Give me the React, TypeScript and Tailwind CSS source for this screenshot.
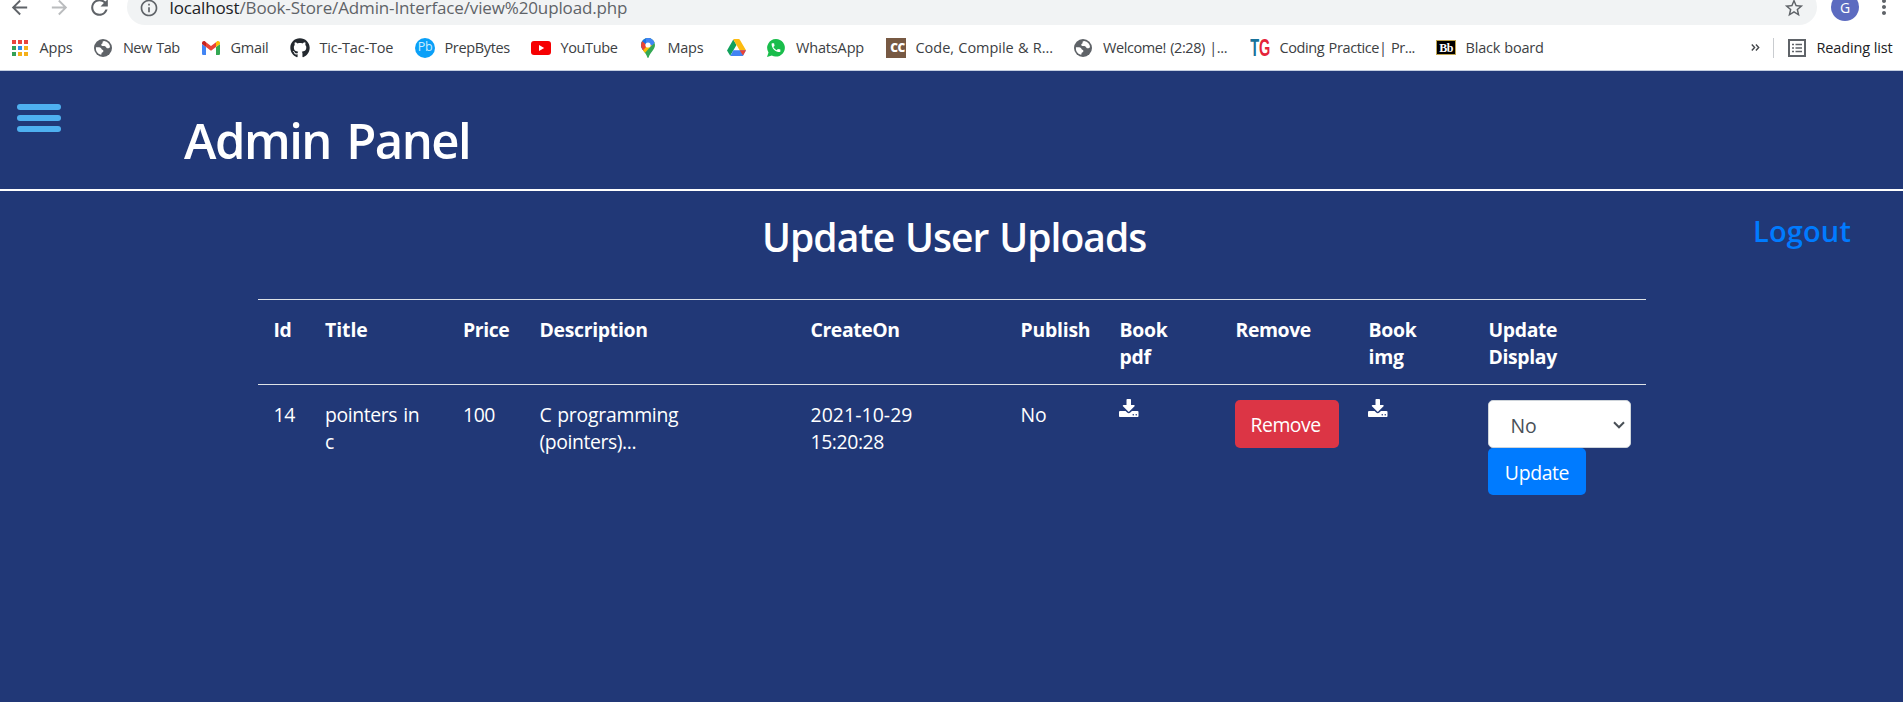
import type { ReactNode } from "react";
import {
  MdArrowBack,
  MdArrowForward,
  MdInfoOutline,
  MdMoreVert,
  MdRefresh,
  MdStarBorder,
} from "react-icons/md";
import { FaGithub } from "react-icons/fa";

function AppsIcon() {
  const colors = ["#e8453c", "#e8453c", "#e8453c", "#34a056", "#2b8de6", "#f5b01a", "#34a056", "#f5b01a", "#f5b01a"];
  return (
    <div className="grid grid-cols-3 gap-[2px]">
      {colors.map((fill, i) => (
        <svg key={i} className="size-[4px]" viewBox="0 0 4 4">
          <rect width="4" height="4" fill={fill} />
        </svg>
      ))}
    </div>
  );
}

function GlobeIcon() {
  return (
    <svg className="size-[18px]" viewBox="0 0 18 18">
      <circle cx="9" cy="9" r="9" fill="#5f6368" />
      <path
        d="M10.2 1.9C8.9 2 8.3 2.7 8.6 3.6c.3.8-.7 1.200-1.200 1.700-.5.6.1 1.500.9 1.600 1.300.1 2.700-.1 3.400.8.5.8 1 1.700 2.100 1.600 1 0 1.500-.8 2.300-.8A7.100 7.100 0 0 0 10.200 1.900Z"
        fill="#fff"
      />
      <path
        d="M1.900 8.300c1.500.1 2.800-.2 4.200.3 1.300.4 1.100 1.800 2.200 2.200 1 .3 1.400 1 .9 1.900-.5.8-1.600.7-1.700 1.700 0 .7-.1 1.200-.6 1.400A7.100 7.100 0 0 1 1.900 8.300Z"
        fill="#fff"
      />
    </svg>
  );
}

function GmailIcon() {
  return (
    <svg className="h-[14px] w-[18px]" viewBox="0 0 18 14">
      <path d="M0 3v9.700C0 13.400.6 14 1.300 14H4V6Z" fill="#4285f4" />
      <path d="M18 3v9.700c0 .7-.6 1.300-1.300 1.300H14V6Z" fill="#34a853" />
      <path d="M14 1.300V6l4-3V2c0-1.800-2-2.500-3.200-1.500Z" fill="#fbbc04" />
      <path d="M4 1.300 9 5l5-3.700V6L9 9.800 4 6Z" fill="#ea4335" />
      <path d="M0 2v1l4 3V1.300L3.200.5C2-.5 0 .2 0 2Z" fill="#c5221f" />
    </svg>
  );
}

function PrepBytesIcon() {
  return (
    <div className="flex size-[20px] items-center justify-center rounded-full bg-[#0aa0f8] text-[12.5px] leading-none tracking-[-0.3px] text-[#c9ecff]">
      Pb
    </div>
  );
}

function YouTubeIcon() {
  return (
    <svg className="h-[14px] w-[20px]" viewBox="0 0 20 14">
      <rect width="20" height="14" rx="3" fill="#f60002" />
      <path d="M8 4v6l5.200-3Z" fill="#fff" />
    </svg>
  );
}

function MapsIcon() {
  return (
    <svg className="h-[20px] w-[14px]" viewBox="0 0 14 20">
      <defs>
        <clipPath id="pin">
          <path d="M7 0a7 7 0 0 1 7 7c0 2.500-1.300 4.300-2.800 6.200C9.600 15.200 8.300 17 7.700 19.300c-.2.900-1.200.9-1.400 0C5.700 17 4.400 15.200 2.800 13.200 1.300 11.300 0 9.500 0 7a7 7 0 0 1 7-7Z" />
        </clipPath>
      </defs>
      <g clipPath="url(#pin)">
        <rect width="14" height="20" fill="#34a853" />
        <path d="M0 13.500 14-2H0Z" fill="#1a73e8" />
        <path d="M-1 1.500 7 8l-6 7Z" fill="#ea4335" />
        <path d="M5 0h10v3.500L9 9.500 5 5Z" fill="#4285f4" />
        <path d="M7 7 0 14.500 3 16l8-9Z" fill="#fbbc04" />
      </g>
      <circle cx="7" cy="7" r="2.600" fill="#fff" />
    </svg>
  );
}

function DriveIcon() {
  return (
    <svg className="h-[17px] w-[19px]" viewBox="0 0 19 17">
      <path d="M6.300.6 9.500 6 3.200 16.800 0 11.400Z" fill="#11a15c" />
      <path d="M6.300.6C6.500.2 6.900 0 7.300 0h4.400c.4 0 .8.200 1 .6L19 11.300h-6.400Z" fill="#fdbb10" />
      <path d="M6.400 11.300H19L16.200 16.400c-.2.400-.6.600-1 .6H3.300Z" fill="#4283f3" />
      <path d="M12.600 11.300H19l-3 5.300Z" fill="#ea4335" />
    </svg>
  );
}

function WhatsAppIcon() {
  return (
    <svg className="size-[18px]" viewBox="0 0 18 18">
      <path d="M9.100 0a8.800 8.800 0 1 1-4.300 16.500L0 18l1.500-4.600A8.800 8.800 0 0 1 9.100 0Z" fill="#19bd4b" />
      <path
        transform="translate(3.100 2.700) scale(.49)"
        d="M6.620 10.790c1.440 2.830 3.760 5.140 6.590 6.590l2.200-2.200c.27-.27.67-.36 1.020-.24 1.120.37 2.330.57 3.570.57.55 0 1 .45 1 1V20c0 .55-.45 1-1 1-9.390 0-17-7.610-17-17 0-.55.45-1 1-1h3.500c.55 0 1 .45 1 1 0 1.250.2 2.450.57 3.570.11.35.03.74-.25 1.020l-2.200 2.200z"
        fill="#fff"
      />
    </svg>
  );
}

function CodeChefIcon() {
  return (
    <div className="flex h-[20px] w-[20px] items-center justify-center bg-[#775943] pl-[3px] text-[12px] font-extrabold leading-none tracking-[-0.6px] text-white">
      CC
    </div>
  );
}

function TgIcon() {
  return (
    <div className="flex h-[20px] w-[20px] items-center justify-center">
      <div className="flex scale-x-[0.66] scale-y-[1.12] font-['Liberation_Sans'] text-[22px] font-bold leading-none">
        <span className="text-[#17729a]">T</span>
        <span className="text-[#e5243a]">G</span>
      </div>
    </div>
  );
}

function BlackboardIcon() {
  return (
    <div className="flex h-[15px] w-[20px] items-center justify-center border border-[#c0a550] bg-black font-['Liberation_Serif'] text-[12px] font-bold leading-none tracking-[-0.5px] text-white">
      Bb
    </div>
  );
}

function ReadingListIcon() {
  return (
    <svg className="size-[18px]" viewBox="0 0 18 18">
      <rect x="1" y="1" width="16" height="16" fill="none" stroke="#5f6368" strokeWidth="2" />
      <path d="M4 5.500h2M4 9h2M4 12.500h2M7.500 5.500H14M7.500 9H14M7.500 12.500H14" stroke="#5f6368" strokeWidth="1.500" />
    </svg>
  );
}

function DownloadIcon() {
  return (
    <svg className="-mt-[2px] h-[18px] w-[19.5px]" viewBox="0 0 1664 1536" fill="currentColor">
      <path d="M1280 1344q0-26-19-45t-45-19-45 19-19 45 19 45 45 19 45-19 19-45zm256 0q0-26-19-45t-45-19-45 19-19 45 19 45 45 19 45-19 19-45zm128-224v320q0 40-28 68t-68 28h-1472q-40 0-68-28t-28-68v-320q0-40 28-68t68-28h465l135 136q58 56 136 56t136-56l136-136h464q40 0 68 28t28 68zm-325-569q17 41-14 70l-448 448q-18 19-45 19t-45-19l-448-448q-31-29-14-70 17-39 59-39h256v-448q0-26 19-45t45-19h256q26 0 45 19t19 45v448h256q42 0 59 39z" />
    </svg>
  );
}

type Bookmark = { icon: ReactNode; label?: string; slot: string; text?: string };

const bookmarks: Bookmark[] = [
  { icon: <AppsIcon />, label: "Apps", slot: "w-[83px]", text: "tracking-[-0.2px]" },
  { icon: <GlobeIcon />, label: "New Tab", slot: "w-[108px]", text: "pl-[0.5px] tracking-[-0.55px] [word-spacing:1.5px]" },
  { icon: <GmailIcon />, label: "Gmail", slot: "w-[89px]", text: "tracking-[-0.27px]" },
  { icon: <FaGithub size={20} color="#24292f" />, label: "Tic-Tac-Toe", slot: "w-[125px]", text: "tracking-[-0.19px]" },
  { icon: <PrepBytesIcon />, label: "PrepBytes", slot: "w-[116px]", text: "tracking-[-0.36px]" },
  { icon: <YouTubeIcon />, label: "YouTube", slot: "w-[107px]", text: "tracking-[-0.37px]" },
  { icon: <MapsIcon />, label: "Maps", slot: "w-[88px]", text: "tracking-[-0.27px]" },
  { icon: <DriveIcon />, slot: "w-[40px]" },
  { icon: <WhatsAppIcon />, label: "WhatsApp", slot: "w-[120px]", text: "pl-[0.5px] tracking-[-0.16px]" },
  { icon: <CodeChefIcon />, label: "Code, Compile & R...", slot: "w-[187px]", text: "tracking-[-0.02px] [word-spacing:0.5px]" },
  { icon: <GlobeIcon />, label: "Welcome! (2:28) |...", slot: "w-[177px]", text: "pl-[0.5px] tracking-[-0.42px] [word-spacing:1px]" },
  { icon: <TgIcon />, label: "Coding Practice| Pr...", slot: "w-[186px]", text: "tracking-[-0.4px] [word-spacing:1px]" },
  { icon: <BlackboardIcon />, label: "Black board", slot: "w-[120px]", text: "tracking-[-0.2px] [word-spacing:0.5px]" },
];

function BrowserChrome() {
  return (
    <header className="h-[71px] overflow-hidden border-b border-[#c3cde0] bg-white text-[#5f6368]">
      <div className="-mt-[11px] flex h-9 items-center">
        <div className="flex w-[127px] shrink-0 items-center pl-2">
          <MdArrowBack size={23} />
          <MdArrowForward size={23} className="ml-[17px] text-[#babcbe]" />
          <MdRefresh size={25} className="ml-4" />
        </div>
        <div className="flex h-9 w-[1690px] items-center rounded-full bg-[#f1f3f4] pl-[12px] pr-[12px]">
          <MdInfoOutline size={20} className="mt-[2px]" />
          <p className="ml-[10.5px] mt-px whitespace-nowrap text-[17px] leading-6 tracking-[-0.14px]">
            <span className="text-[#202124]">localhost</span>/Book-Store/Admin-Interface/view%20upload.php
          </p>
          <MdStarBorder size={22} className="ml-auto mt-px" />
        </div>
        <div className="ml-[14px] flex size-7 items-center justify-center rounded-full bg-[#5c6bc0] text-[14px] text-white">
          G
        </div>
        <MdMoreVert size={24} className="ml-[13px] shrink-0" />
      </div>
      <div className="flex h-[45px] items-center pl-[10px] text-[14.5px] leading-5 text-[#3c4043]">
        {bookmarks.map((b, i) => (
          <div key={i} className={`flex shrink-0 items-center gap-[9.5px] ${b.slot}`}>
            <div className="flex w-5 shrink-0 justify-center">{b.icon}</div>
            {b.label && <span className={`whitespace-nowrap ${b.text}`}>{b.label}</span>}
          </div>
        ))}
        <svg className="ml-[195px] h-[7px] w-[9px] shrink-0" viewBox="0 0 9 7">
          <path d="M.8.500 3.600 3.500.8 6.500M4.900.500 7.700 3.500 4.900 6.500" fill="none" stroke="#44474a" strokeWidth="1.400" />
        </svg>
        <div className="ml-[13px] h-5 w-px bg-[#c9ccd0]" />
        <div className="ml-[14px]">
          <ReadingListIcon />
        </div>
        <span className="ml-[10.5px] whitespace-nowrap tracking-[-0.12px] text-[#202124]">Reading list</span>
      </div>
    </header>
  );
}

const columns = [
  { label: "Id", width: "w-[51px]", text: "pl-[15.5px] tracking-[-0.3px]" },
  { label: "Title", width: "w-[138px]", text: "pl-4 tracking-[-0.05px]" },
  { label: "Price", width: "w-[77px]", text: "pl-4 tracking-[-0.4px]" },
  { label: "Description", width: "w-[271px]", text: "pl-[15.5px] tracking-[-0.3px]" },
  { label: "CreateOn", width: "w-[210px]", text: "pl-[15.5px] tracking-[-0.4px]" },
  { label: "Publish", width: "w-[99px]", text: "pl-[15.5px] tracking-[-0.23px]" },
  { label: "Book pdf", width: "w-[116px]", text: "pl-[15.5px] tracking-[-0.23px]" },
  { label: "Remove", width: "w-[133px]", text: "pl-[15.5px] tracking-[-0.4px]" },
  { label: "Book img", width: "w-[120px]", text: "pl-[15.5px] tracking-[-0.23px]" },
  { label: "Update Display", width: "w-[173px]", text: "pl-[15.5px] tracking-[-0.35px]" },
];

function Lines({ text }: { text: string }) {
  return (
    <>
      {text.split(" ").map((word) => (
        <div key={word}>{word}</div>
      ))}
    </>
  );
}

function UploadsTable() {
  return (
    <table className="ml-[258px] w-[1388px] table-fixed border-collapse text-left text-[19.4px] leading-[27px]">
      <thead>
        <tr className="h-[85px] border-t border-[#dee2e6] align-top">
          {columns.map((c) => (
            <th key={c.label} className={`pt-4 font-bold ${c.width} ${c.text}`}>
              <Lines text={c.label} />
            </th>
          ))}
        </tr>
      </thead>
      <tbody>
        <tr className="border-t border-[#dee2e6] align-top">
          <td className="pl-[15.5px] pt-4 tracking-[-0.4px]">14</td>
          <td className="pl-4 pt-4 tracking-[-0.4px] [word-spacing:1.5px]">
            pointers in
            <br />c
          </td>
          <td className="pl-4 pt-4 tracking-[-0.45px]">100</td>
          <td className="pl-[15.5px] pt-4">
            <div className="tracking-[-0.25px] [word-spacing:1px]">C programming</div>
            <div className="tracking-[-0.41px]">(pointers)...</div>
          </td>
          <td className="pl-[15.5px] pt-4">
            <div className="tracking-[0.08px]">2021-10-29</div>
            <div className="tracking-[-0.41px]">15:20:28</div>
          </td>
          <td className="pl-[15.5px] pt-4">No</td>
          <td className="pl-[15px] pt-4">
            <DownloadIcon />
          </td>
          <td className="pl-[15px] pt-[15px]">
            <button className="flex h-12 w-[104px] rounded-[5px] bg-[#dc3545] pl-[15.5px] pt-[11px] tracking-[-0.48px]">
              Remove
            </button>
          </td>
          <td className="pl-[15px] pt-4">
            <DownloadIcon />
          </td>
          <td className="pl-[15px] pt-[15px]">
            <div className="flex h-12 w-[143px] justify-between rounded-[5px] border border-[#ced4da] bg-white pl-[20.5px] pr-[5px] pt-[11px] text-[#495057]">
              <span className="pl-px tracking-[-0.2px]">No</span>
              <svg className="mt-[9px] h-[8px] w-[12px]" viewBox="0 0 12 8">
                <path d="M1 1.300 6 6.300l5-5" fill="none" stroke="#495057" strokeWidth="2" />
              </svg>
            </div>
            <button className="flex h-[47px] w-[98px] justify-center rounded-[5px] bg-[#007bff] pt-[11px] tracking-[-0.36px]">
              Update
            </button>
          </td>
        </tr>
      </tbody>
    </table>
  );
}

export default function App() {
  return (
    <div className="h-[702px] w-full overflow-hidden bg-[#213877] font-['Open_Sans','Noto_Sans',sans-serif] text-white">
      <BrowserChrome />
      <div className="flex h-[120px] items-start border-b-2 border-white">
        <button className="ml-[17px] mt-[33px] flex w-11 flex-col gap-[5px]">
          <span className="h-[6px] w-full rounded-full bg-[#4eb0f0]" />
          <span className="h-[6px] w-full rounded-full bg-[#4eb0f0]" />
          <span className="h-[6px] w-full rounded-full bg-[#4eb0f0]" />
        </button>
        <h1 className="ml-[123px] mt-[39px] text-[49px] font-semibold leading-[60px] tracking-[-1.5px] [word-spacing:4px]">
          Admin Panel
        </h1>
      </div>
      <div className="flex h-[108px] items-start pl-[762px] pt-[22px]">
        <h2 className="w-[991px] whitespace-nowrap text-[39px] font-semibold leading-[48px] tracking-[-0.95px] [word-spacing:1.5px]">
          Update User Uploads
        </h2>
        <a className="text-[29px] font-semibold leading-9 tracking-[0.15px] text-[#007bff]">Logout</a>
      </div>
      <UploadsTable />
    </div>
  );
}
